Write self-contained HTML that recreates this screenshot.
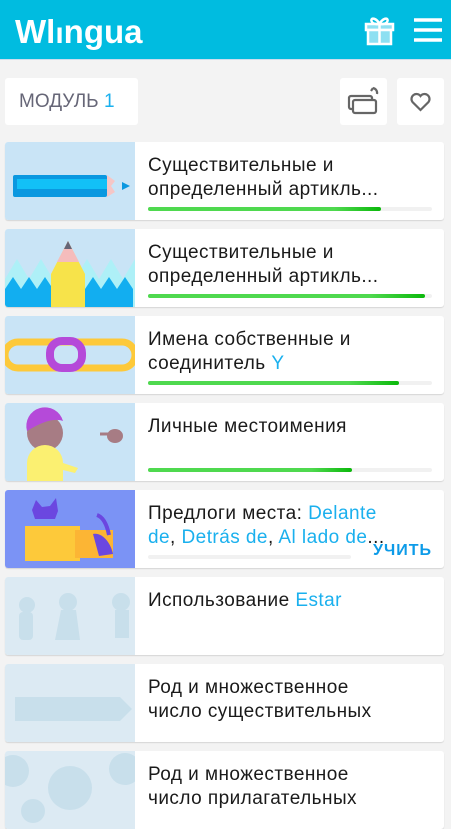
<!DOCTYPE html>
<html><head><meta charset="utf-8"><style>
*{margin:0;padding:0;box-sizing:border-box}
body{width:451px;height:804px;overflow:hidden;background:#f3f3f3;font-family:"Liberation Sans",sans-serif}
.hdr{height:60px;background:#00bce0;position:relative;border-bottom:1px solid #cde}
.logo{position:absolute;left:15px;top:13px;color:#fff;font-size:33px;font-weight:bold;letter-spacing:0px}
.tb{position:absolute;top:78px;height:47px;background:#fff;border-radius:3px}
.card{position:absolute;left:5px;width:439px;height:78px;background:#fff;border-radius:3px;box-shadow:0 1px 1px rgba(0,0,0,.12);overflow:hidden}
.img{position:absolute;left:0;top:0;width:130px;height:78px;background:#c9e4f6}
.t{position:absolute;left:143px;top:12px;font-size:19px;line-height:24px;color:#1a1a1a;width:245px;letter-spacing:0.45px}
.b{color:#1ab0ee}
.pb{position:absolute;left:143px;top:65px;width:284px;height:4px;border-radius:2px;background:#f1f1f1}
.pf{height:4px;border-radius:2px;background:linear-gradient(90deg,#4fd94f 80%,#0bb80b)}
</style></head><body>
<div class="hdr"><div class="logo">Wl<span style="font-size:30px">ı</span>ngua</div>
<svg style="position:absolute;left:364px;top:14px" width="32" height="32" viewBox="0 0 32 32" fill="none" stroke="#fff" stroke-width="2.5"><rect x="2" y="10" width="27" height="6" fill="#8ee0f2"/><rect x="4" y="16" width="23" height="14" fill="#8ee0f2"/><path d="M15.5 10v20M15.5 10c-3-6-9-7-8-3s8 3 8 3c3-6 9-7 8-3s-8 3-8 3"/></svg>
<svg style="position:absolute;left:413px;top:17px" width="30" height="26" viewBox="0 0 30 26" stroke="#fff" stroke-width="3.5"><path d="M1 3h28M1 13h28M1 23h28"/></svg>
</div>
<div class="tb" style="left:5px;width:133px;font-size:19px;color:#667;padding:13px 0 0 14px">МОДУЛЬ <span class="b">1</span></div>
<div class="tb" style="left:340px;width:47px"><svg width="47" height="47" viewBox="0 0 47 47" fill="none" stroke="#666" stroke-width="2.2"><rect x="9" y="18" width="23" height="13" rx="2"/><rect x="13" y="22" width="23" height="13" rx="2" fill="#fff"/><path d="M33 10a5 5 0 0 1 4 6M33 10l-2 3"/></svg></div>
<div class="tb" style="left:397px;width:47px"><svg width="47" height="47" viewBox="0 0 47 47" fill="none" stroke="#666" stroke-width="2.2"><path d="M23.5 32l-8-8a5 5 0 0 1 8-6a5 5 0 0 1 8 6z"/></svg></div>

<div class="card" style="top:142px"><div class="img"><svg width="130" height="78"><rect x="8" y="33" width="94" height="22" rx="2" fill="#0a98e0"/><rect x="12" y="37" width="90" height="10" fill="#12c0f7"/><path d="M102 33l8 6-4 5 4 6-8 5z" fill="#f5c6c6"/><path d="M117 40l8 4-8 4z" fill="#0a98e0"/></svg></div><div class="t">Существительные и определенный артикль...</div><div class="pb"><div class="pf" style="width:233px"></div></div></div>

<div class="card" style="top:229px"><div class="img"><svg width="130" height="78"><path d="M0 50l12-20 12 20 12-20 12 20 12-20 V78H0z" fill="#aef0f7"/><path d="M70 50l12-20 12 20 12-20 12 20 12-20V78H70z" fill="#aef0f7"/><path d="M0 60l8-12 8 12 8-12 8 12 8-12 8 12 8-12V78H0z" fill="#12aef0"/><path d="M80 60l8-12 8 12 8-12 8 12 8-12 8 12V78H80z" fill="#12aef0"/><path d="M46 45l17-33 17 33v33H46z" fill="#f7e34a"/><path d="M52 33l11-21 11 21z" fill="#f5bcbc"/><path d="M59 20l4-8 4 8z" fill="#667"/></svg></div><div class="t">Существительные и определенный артикль...</div><div class="pb"><div class="pf" style="width:277px"></div></div></div>

<div class="card" style="top:316px"><div class="img"><svg width="130" height="78"><rect x="0" y="26" width="130" height="26" rx="13" fill="none" stroke="#fdc93a" stroke-width="7"/><rect x="45" y="25" width="32" height="27" rx="12" fill="none" stroke="#b54ad9" stroke-width="8"/></svg></div><div class="t">Имена собственные и соединитель <span class="b">Y</span></div><div class="pb"><div class="pf" style="width:251px"></div></div></div>

<div class="card" style="top:403px"><div class="img"><svg width="130" height="78"><circle cx="40" cy="30" r="18" fill="#a77c84"/><path d="M22 28a18 18 0 0 1 36-10c-8-3-20 0-36 10z" fill="#b54ad9"/><path d="M22 78V60a18 18 0 0 1 36 0l15 5-3 5-12-3v11z" fill="#fbf071"/><ellipse cx="110" cy="33" rx="8" ry="7" fill="#a77c84"/><path d="M95 31h10" stroke="#a77c84" stroke-width="3"/></svg></div><div class="t">Личные местоимения</div><div class="pb"><div class="pf" style="width:204px"></div></div></div>

<div class="card" style="top:490px"><div class="img" style="background:#7b93f5"><svg width="130" height="78"><path d="M27 20l4-10 6 7 8-1 6-8 2 13-3 8h-20z" fill="#6b47e0"/><rect x="20" y="36" width="55" height="35" fill="#fdc93a"/><rect x="70" y="40" width="38" height="28" fill="#fcb534"/><path d="M88 44c10-2 18 10 20 20l-14 2z" fill="#6b47e0"/><path d="M92 25c6 2 10 10 12 20" stroke="#6b47e0" stroke-width="4" fill="none"/></svg></div><div class="t">Предлоги места: <span class="b">Delante de</span>, <span class="b">Detrás de</span>, <span class="b">Al lado de</span>...</div><div class="pb" style="width:203px"></div><div style="position:absolute;right:12px;top:52px;color:#0d9be8;font-weight:bold;font-size:16px;letter-spacing:1px">УЧИТЬ</div></div>

<div class="card" style="top:577px"><div class="img" style="background:#dceaf3"><svg width="130" height="78" fill="#c8dfeb"><circle cx="22" cy="28" r="8"/><rect x="14" y="35" width="14" height="28" rx="4"/><circle cx="63" cy="25" r="9"/><path d="M56 33h15l4 30H50z"/><circle cx="116" cy="25" r="9"/><rect x="110" y="33" width="14" height="28"/></svg></div><div class="t">Использование <span class="b">Estar</span></div></div>

<div class="card" style="top:664px"><div class="img" style="background:#dceaf3"><svg width="130" height="78"><path d="M10 33h105l12 12-12 12H10z" fill="#c8dfeb"/></svg></div><div class="t" style="top:12px;width:225px">Род и множественное число существительных</div></div>

<div class="card" style="top:751px"><div class="img" style="background:#dceaf3"><svg width="130" height="78" fill="#c8dfeb"><circle cx="8" cy="20" r="16"/><circle cx="65" cy="37" r="22"/><circle cx="120" cy="18" r="16"/><circle cx="28" cy="60" r="12"/></svg></div><div class="t" style="top:12px;width:225px">Род и множественное число прилагательных</div></div>
</body></html>
